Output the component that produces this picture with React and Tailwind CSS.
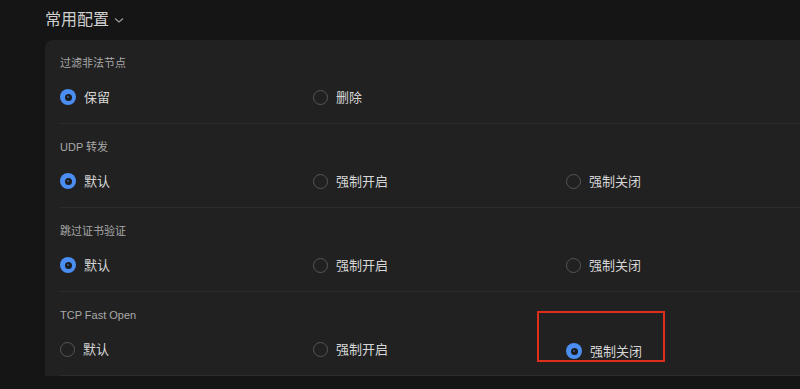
import React from 'react';

const sections = [
  { label: '过滤非法节点', options: ['保留', '删除'], selected: 0 },
  { label: 'UDP 转发', options: ['默认', '强制开启', '强制关闭'], selected: 0 },
  { label: '跳过证书验证', options: ['默认', '强制开启', '强制关闭'], selected: 0 },
  { label: 'TCP Fast Open', options: ['默认', '强制开启', '强制关闭'], selected: 2, marked: true },
];

function Radio({ checked }) {
  if (checked) {
    return (
      <span className="flex h-[16px] w-[16px] shrink-0 items-center justify-center rounded-full bg-[#4b8ef2]">
        <span className="h-[7px] w-[7px] rounded-full bg-[#1c1c1c] flex items-center justify-center">
          <span className="h-[2px] w-[2px] rounded-full bg-[#3a5f94]" />
        </span>
      </span>
    );
  }
  return <span className="h-[15px] w-[15px] shrink-0 rounded-full border border-[#555555]" />;
}

export default function App() {
  return (
    <div
      className="h-[389px] w-[800px] overflow-hidden bg-[#151515] pl-[45px]"
      style={{ fontFamily: '"Liberation Sans", "Noto Sans CJK SC", sans-serif' }}
    >
      {/* header */}
      <div className="flex h-[40px] items-center gap-[5px] pb-[1px]">
        <span className="text-[16px] leading-none text-[#cfcfcf]">常用配置</span>
        <svg width="10" height="8" viewBox="0 0 10 8" className="mt-[1px]">
          <path d="M1 2.5 L5 6 L9 2.5" fill="none" stroke="#a0a0a0" strokeWidth="1.1" />
        </svg>
      </div>

      {/* card */}
      <div className="rounded-tl-[8px] bg-[#212121] pl-[15px]">
        {sections.map((s) => (
          <div key={s.label} className="border-b border-[#2d2d2d] pt-[15px] pb-[16px]">
            <div className="h-[16px] text-[11px] leading-[16px] text-[#a9a9a9]">{s.label}</div>
            <div className="mt-[16px] flex h-[20px]">
              {s.options.map((o, i) => (
                <div key={o} className="relative flex w-[253px] shrink-0 items-center">
                  <div
                    className={`flex items-center gap-[8px] ${
                      s.marked && i === 2 ? 'translate-y-[2px]' : ''
                    }`}
                  >
                    <Radio checked={i === s.selected} />
                    <span className="text-[13px] leading-none text-[#d6d6d6]">{o}</span>
                  </div>
                  {s.marked && i === 2 && (
                    <div className="pointer-events-none absolute left-[-29px] top-[-28px] h-[51px] w-[128px] border-2 border-[#e02e1c]" />
                  )}
                </div>
              ))}
            </div>
          </div>
        ))}
      </div>
    </div>
  );
}
